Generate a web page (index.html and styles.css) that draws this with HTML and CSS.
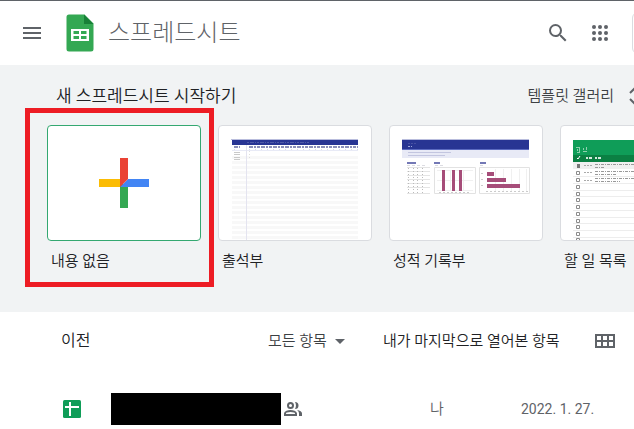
FILE: index.html
```html
<!DOCTYPE html>
<html lang="ko">
<head>
<meta charset="utf-8">
<meta name="viewport" content="width=device-width, initial-scale=1">
<title>스프레드시트</title>
<link rel="stylesheet" href="styles.css">
</head>
<body>
<header class="topbar">
  <button class="icon-button" type="button" aria-label="메뉴">
    <svg width="18" height="12" viewBox="0 0 18 12"><path d="M0 0h18v2H0zM0 5h18v2H0zM0 10h18v2H0z"/></svg>
  </button>
  <svg class="logo" width="28" height="38" viewBox="0 0 28 38" aria-hidden="true">
    <path fill="#34a853" d="M3 .5h15.500l9 9V35a2.500 2.500 0 0 1-2.500 2.500H3A2.500 2.500 0 0 1 .5 35V3A2.500 2.500 0 0 1 3 .5z"/>
    <path fill="#188038" d="M18 .5l9.500 9.500H18z"/>
    <path fill="#fff" fill-rule="evenodd" d="M5 15h18v12H5zM7.500 17v3h5.500v-3zM15 17v3h5.500v-3zM7.500 22v3h5.500v-3zM15 22v3h5.500v-3z"/>
  </svg>
  <h1 class="brand">스프레드시트</h1>
  <button class="icon-button search" type="button" aria-label="검색">
    <svg width="18" height="18" viewBox="3 3 18 18"><path d="M15.500 14h-.79l-.28-.27A6.471 6.471 0 0 0 16 9.500 6.500 6.500 0 1 0 9.500 16c1.610 0 3.090-.59 4.230-1.570l.27.28v.79l5 4.990L20.490 19l-4.990-5zm-6 0C7.010 14 5 11.990 5 9.500S7.010 5 9.500 5 14 7.010 14 9.500 11.990 14 9.500 14z"/></svg>
  </button>
  <button class="icon-button apps" type="button" aria-label="앱">
    <svg width="16" height="16" viewBox="0 0 16 16"><circle cx="2" cy="2" r="2"/><circle cx="8" cy="2" r="2"/><circle cx="14" cy="2" r="2"/><circle cx="2" cy="8" r="2"/><circle cx="8" cy="8" r="2"/><circle cx="14" cy="8" r="2"/><circle cx="2" cy="14" r="2"/><circle cx="8" cy="14" r="2"/><circle cx="14" cy="14" r="2"/></svg>
  </button>
  <button class="account" type="button" aria-label="계정"></button>
</header>

<section class="templates">
  <div class="templates-head">
    <h2 class="templates-title">새 스프레드시트 시작하기</h2>
    <button class="gallery" type="button">템플릿 갤러리
      <svg width="12" height="18" viewBox="0 0 12 18"><path fill="none" stroke="#5f6368" stroke-width="2" d="M1 6l5-5 5 5M1 12l5 5 5-5"/></svg>
    </button>
  </div>
  <div class="cards">
    <a class="card highlighted" href="#">
      <span class="thumb blank">
        <svg width="50" height="50" viewBox="0 0 50 50"><path fill="#34a853" d="M21 26h8v24h-8z"/><path fill="#fbbc04" d="M0 21h21v8H0z"/><path fill="#4285f4" d="M29 21h21v8H21z"/><path fill="#ea4335" d="M21 0h8v21l-8 8z"/></svg>
      </span>
      <span class="label">내용 없음</span>
    </a>
    <a class="card" href="#">
      <span class="thumb">
        <svg width="152" height="114" viewBox="219 126 152 114">
          <defs>
            <pattern id="stripes" x="232" y="155" width="10" height="5" patternUnits="userSpaceOnUse"><path fill="#f8f8f8" d="M0 1h10v3H0z"/></pattern>
          </defs>
          <path fill="#b9bddd" d="M231 139h127v1H231z"/>
          <path fill="#283593" d="M232 140h126v5H232z"/>
          <path stroke="#4f5aa6" stroke-dasharray="2 1 4 1 1 1" d="M247 142.500h63"/>
          <path stroke="#8a8fb9" stroke-width="2" stroke-dasharray="4 1 2 1 3 1" d="M249 147h109M234 147h6"/>
          <path stroke="#dcdde9" stroke-dasharray="1 5" d="M249 149.500h109M234 149.500h4"/>
          <path stroke="#e8eaf6" d="M232 150.500h126"/>
          <path fill="url(#stripes)" d="M232 155h126v85H232z"/>
          <path stroke="#e4e4f0" d="M246.500 145v95"/>
          <path stroke="#c9c9c9" d="M234 152.500h6M234 154.500h6M234 157.500h6M234 159.500h6"/>
          <path stroke="#ddd" stroke-dasharray="1 2" d="M249.500 151v9"/>
        </svg>
      </span>
      <span class="label">출석부</span>
    </a>
    <a class="card" href="#">
      <span class="thumb">
        <svg width="152" height="114" viewBox="390 126 152 114">
          <path fill="#b9bddd" d="M402 139h127v1H402z"/>
          <path fill="#283593" d="M402 140h127v9H402z"/>
          <path fill="#5c6bc0" d="M402 149h127v1H402z"/>
          <path fill="#e8eaf6" d="M402 150h127v8H402z"/>
          <path stroke="#4650a2" stroke-dasharray="2 1" d="M408 143.500h8"/>
          <path stroke="#9fa8da" stroke-dasharray="2 1" d="M408 146.500h4"/>
          <path stroke="#c3c6e0" d="M408 152.500h43M408 155.500h37"/>
          <path stroke="#7378b5" stroke-width="2" d="M407 163h9M434 163h6M480 163h6"/>
          <path stroke="#dcdce2" stroke-dasharray="3 2" d="M407 165.500h19M435 165.500h9M480 165.500h4"/>
          <path stroke="#e4e4e4" d="M407 167.500h23M407 171.500h23M407 175.500h23M407 179.500h23M407 183.500h23M407 187.500h23M407 193.500h23"/>
          <path stroke="#bbb" stroke-dasharray="1 2" d="M408.500 168v26M413.500 168v26M417.500 168v26M422.500 168v26"/>
          <path fill="none" stroke="#e2e2e2" d="M434.500 167.500h41v26h-41zM479.500 167.500h50v26h-50z"/>
          <path stroke="#f0f0f0" d="M437 170.500h36M437 180.500h36M437 190.500h36M450.500 170v21M463.500 170v21M495.500 169v22M503.500 169v22M511.500 169v22M519.500 169v22M526.500 169v22"/>
          <path stroke="#ccc" stroke-dasharray="2 2" d="M439 192.500h30M481 173.500h4M481 179.500h4M481 185.500h4M486 191.500h42"/>
          <path fill="#a64d79" d="M442 170h3v21h-3zM452 170h3v21h-3zM459 170h3v21h-3zM487 172h7v4h-7zM487 178h19v4h-19zM487 184h33v4h-33z"/>
        </svg>
      </span>
      <span class="label">성적 기록부</span>
    </a>
    <a class="card" href="#">
      <span class="thumb">
        <svg width="152" height="114" viewBox="561 126 152 114">
          <path fill="#0f9d58" d="M573 140h127v15H573z"/>
          <path fill="#0b8043" d="M573 155h127v7H573z"/>
          <path fill="none" stroke="#8fd0ae" d="M576 147.500h4M577.500 149v2M579.500 147v5M577 152.500h3M583.500 148v2M586.500 147v3M583 151.500h4"/>
          <path fill="none" stroke="#fff" d="M577 158l1 1 2-3"/>
          <path stroke="#d5eadf" stroke-width="2" d="M586 158h2M589 158h3M595 158h2M598 158h3"/>
          <path fill="#f0f0f0" d="M573 162h127v7H573z"/>
          <path stroke="#ededed" d="M573 176.500h127M573 183.500h127M573 190.500h127M573 196.500h127M573 203.500h127M573 210.500h127M573 217.500h127M573 223.500h127M573 230.500h127M573 237.500h127"/>
          <path fill="#777" d="M577 164h3v4h-3z"/>
          <path fill="none" stroke="#8c8c8c" d="M576.500 171.500h3v3h-3zM576.500 178.500h3v3h-3zM576.500 185.500h3v3h-3zM576.500 192.500h3v3h-3zM576.500 198.500h3v3h-3zM576.500 205.500h3v3h-3zM576.500 212.500h3v3h-3zM576.500 219.500h3v3h-3zM576.500 225.500h3v3h-3zM576.500 232.500h3v3h-3zM576.500 238.500h3v3h-3z"/>
          <path stroke="#aaa" stroke-dasharray="2 1" d="M584 165.500h8M584 172.500h8M584 180.500h8"/>
          <path stroke="#999" stroke-dasharray="3 1 1 1" d="M595 164.500h60M595 167.500h9M595 171.500h60M595 174.500h22M595 178.500h60M595 181.500h25"/>
        </svg>
      </span>
      <span class="label">할 일 목록</span>
    </a>
  </div>
</section>

<main class="documents">
  <div class="list-head">
    <h2 class="list-title">이전</h2>
    <button class="filter" type="button">모든 항목
      <svg width="10" height="5" viewBox="0 0 10 5"><path d="M0 0h10L5 5z"/></svg>
    </button>
    <span class="sort">내가 마지막으로 열어본 항목</span>
    <button class="icon-button" type="button" aria-label="바둑판식 보기">
      <svg width="20" height="14" viewBox="0 0 20 14"><path fill-rule="evenodd" d="M0 0h20v14H0zM2 2v4h4V2zM8 2v4h4V2zM14 2v4h4V2zM2 8v4h4V8zM8 8v4h4V8zM14 8v4h4V8z"/></svg>
    </button>
  </div>
  <div class="row">
    <svg width="18" height="18" viewBox="0 0 18 18" aria-hidden="true"><rect width="18" height="18" rx="1.500" fill="#0f9d58"/><path fill="#fff" d="M6 2h2v4h8v2H8v8H6V8H2V6h4z"/></svg>
    <div class="name">
      <span class="redacted"></span>
      <svg class="shared" width="18" height="14" viewBox="0 0 18 14" aria-label="공유됨"><path fill="none" stroke="#5f6368" stroke-width="2" d="M6.500 1a2.500 2.500 0 1 1 0 5 2.500 2.500 0 0 1 0-5zM1 13v-1.500c0-1.500 3-2.500 5.500-2.500s5.500 1 5.500 2.500V13z"/><path d="M11 0a3.500 3.500 0 0 1 0 7c1.300-1.900 1.300-5.100 0-7zM13 8c3 .5 5 1.800 5 3.500V14h-3v-2.500c0-1.500-.8-2.700-2-3.500z"/></svg>
    </div>
    <span class="owner">나</span>
    <time class="date" datetime="2022-01-27">2022. 1. 27.</time>
  </div>
</main>
</body>
</html>
```
FILE: styles.css
```css
* {
  box-sizing: border-box;
}

body {
  margin: 0;
  overflow: hidden;
  background: #fff;
  color: #202124;
  font-family: Roboto, "Noto Sans CJK KR", sans-serif;
  font-size: 15px;
  font-weight: 350;
  line-height: 20px;
}

button {
  padding: 0;
  border: 0;
  background: none;
  color: inherit;
  font: inherit;
}

h1,
h2 {
  margin: 0;
  font-weight: 350;
}

svg {
  display: block;
  flex: none;
  fill: #5f6368;
}

.topbar {
  display: flex;
  align-items: center;
  height: 65px;
  padding-left: 23px;
  border-top: 1px solid #5f6368;
  overflow: hidden;
}

.logo {
  margin-left: 25px;
}

.brand {
  margin-left: 14px;
  color: #5f6368;
  font-size: 24px;
  font-weight: 300;
  line-height: 32px;
}

.search {
  margin-left: auto;
}

.apps {
  margin: 0 24px 0 25px;
}

.account {
  flex: none;
  width: 120px;
  height: 42px;
  margin-right: -118px;
  border: 1px solid #dadce0;
  border-radius: 6px;
}

.templates {
  padding: 20px 0 41px 47px;
  background: #f1f3f4;
  overflow: hidden;
}

.templates-head {
  display: flex;
  justify-content: space-between;
  align-items: center;
  height: 22px;
  margin-bottom: 18px;
  padding-left: 9px;
}

.templates-title {
  font-size: 17px;
}

.gallery {
  display: flex;
  align-items: center;
  gap: 15px;
  margin-right: -7px;
  color: #3c4043;
}

.cards {
  display: flex;
  gap: 17px;
}

.card {
  position: relative;
  flex: none;
  width: 154px;
  color: inherit;
  text-decoration: none;
}

.highlighted::after {
  content: "";
  position: absolute;
  inset: -17px -13px -16px -22px;
  border: 5px solid #ed1c24;
}

.thumb {
  display: flex;
  align-items: center;
  justify-content: center;
  height: 116px;
  border: 1px solid #dadce0;
  border-radius: 4px;
  background: #fff;
  overflow: hidden;
}

.blank {
  border-color: #34a871;
}

.label {
  display: block;
  margin-top: 10px;
  padding-left: 4px;
}

.list-head {
  display: grid;
  grid-template-columns: 207px 115px 1fr auto;
  align-items: center;
  height: 58px;
  padding: 0 19px 0 61px;
}

.list-title {
  font-size: 16px;
}

.filter {
  display: flex;
  align-items: center;
  gap: 8px;
  color: #3c4043;
}

.row {
  display: grid;
  grid-template-columns: 48px 319px 91px 1fr;
  align-items: center;
  height: 48px;
  margin-top: 15px;
  padding-left: 63px;
  color: #5f6368;
}

.name {
  display: flex;
  align-items: center;
  gap: 3px;
}

.redacted {
  width: 170px;
  height: 32px;
  background: #000;
}

.date {
  font-size: 14px;
  font-weight: 400;
}
```
